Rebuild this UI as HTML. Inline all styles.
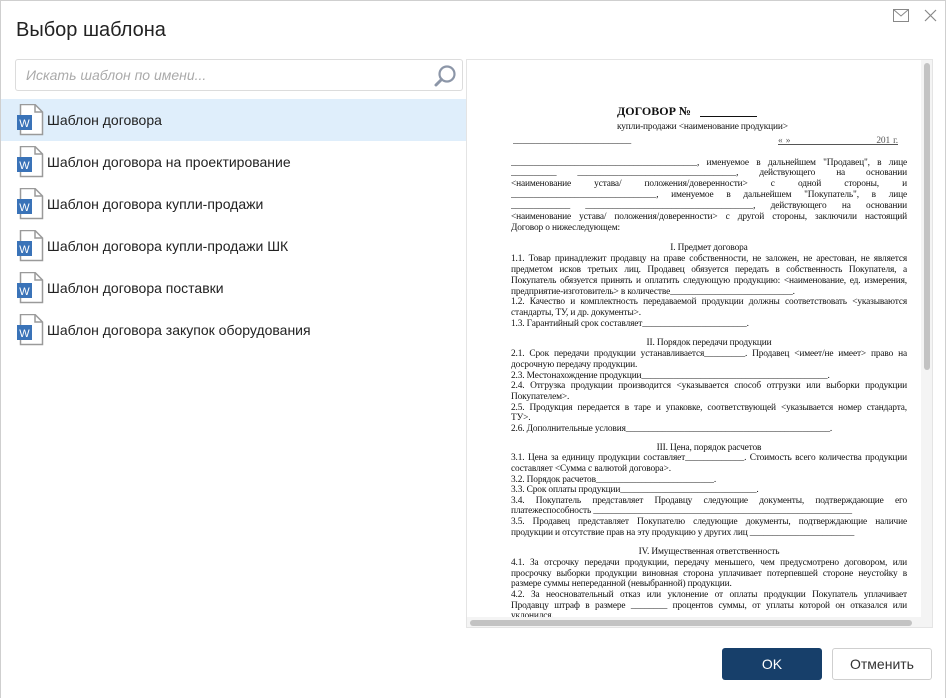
<!DOCTYPE html>
<html><head><meta charset="utf-8">
<style>
*{margin:0;padding:0;box-sizing:border-box}
html,body{width:947px;height:698px;overflow:hidden;background:#fff;font-family:"Liberation Sans",sans-serif}
.frame{position:absolute;left:0;top:0;width:946px;height:698px;border:1px solid #cfcfcf;border-bottom:none}
.title{position:absolute;left:16px;top:19px;font-size:20px;color:#222}
.search{position:absolute;left:15px;top:59px;width:448px;height:32px;border:1px solid #dcdcdc;border-radius:3px}
.search span{position:absolute;left:10px;top:7px;font-size:14px;font-style:italic;color:#aaa}
.row{position:absolute;left:1px;width:465px;height:42px}
.row.sel{background:#dfeefb}
.row .t{position:absolute;left:46px;top:13px;font-size:14px;color:#222}
.ic{position:absolute;left:15px;top:5px}
.pv{position:absolute;left:466px;top:59px;width:467px;height:569px;border:1px solid #e4e4e4;background:#fff;overflow:hidden}
.doc{position:absolute;left:0;top:0;font-family:"Liberation Serif",serif;font-size:9.4px;color:#111;letter-spacing:-0.15px}
.l{position:absolute;left:44px;width:396px;white-space:nowrap;line-height:11px;height:11px;overflow:hidden}
.j{text-align:justify;text-align-last:justify;white-space:normal}
.c{text-align:center}
.btn{position:absolute;top:648px;width:100px;height:32px;border-radius:3px;font-size:14px;text-align:center;line-height:30px}
</style></head><body>
<div class="frame"></div>
<div class="title">Выбор шаблона</div>
<svg style="position:absolute;left:893px;top:9px" width="16" height="13"><rect x="0.5" y="0.5" width="15" height="12" fill="none" stroke="#888"/><path d="M0.5 0.5L8 7L15.5 0.5" fill="none" stroke="#888"/></svg>
<svg style="position:absolute;left:924px;top:9px" width="13" height="13"><path d="M1 1L12 12M12 1L1 12" stroke="#888" stroke-width="1.2"/></svg>
<div class="search"><span>Искать шаблон по имени...</span>
<svg style="position:absolute;left:417px;top:4px" width="24" height="24"><circle cx="14" cy="10" r="7.5" fill="none" stroke="#8c96a8" stroke-width="2.2"/><path d="M8.5 15.5L3 21" stroke="#8c96a8" stroke-width="3" stroke-linecap="round"/></svg></div>

<div class="row sel" style="top:99px"><svg class="ic" width="30" height="32"><path d="M4.5 0.5H19L26.5 8V30.5H4.5Z" fill="#fff" stroke="#9a9a9a" stroke-width="1.5"/><path d="M19 0.5V8H26.5" fill="none" stroke="#9a9a9a" stroke-width="1.5"/><rect x="1" y="11" width="15" height="15" fill="#3a73b8"/><text x="8.5" y="23" font-size="11" fill="#fff" text-anchor="middle" font-family="Liberation Sans">W</text></svg><div class="t">Шаблон договора</div></div>
<div class="row" style="top:141px"><svg class="ic" width="30" height="32"><path d="M4.5 0.5H19L26.5 8V30.5H4.5Z" fill="#fff" stroke="#9a9a9a" stroke-width="1.5"/><path d="M19 0.5V8H26.5" fill="none" stroke="#9a9a9a" stroke-width="1.5"/><rect x="1" y="11" width="15" height="15" fill="#3a73b8"/><text x="8.5" y="23" font-size="11" fill="#fff" text-anchor="middle" font-family="Liberation Sans">W</text></svg><div class="t">Шаблон договора на проектирование</div></div>
<div class="row" style="top:183px"><svg class="ic" width="30" height="32"><path d="M4.5 0.5H19L26.5 8V30.5H4.5Z" fill="#fff" stroke="#9a9a9a" stroke-width="1.5"/><path d="M19 0.5V8H26.5" fill="none" stroke="#9a9a9a" stroke-width="1.5"/><rect x="1" y="11" width="15" height="15" fill="#3a73b8"/><text x="8.5" y="23" font-size="11" fill="#fff" text-anchor="middle" font-family="Liberation Sans">W</text></svg><div class="t">Шаблон договора купли-продажи</div></div>
<div class="row" style="top:225px"><svg class="ic" width="30" height="32"><path d="M4.5 0.5H19L26.5 8V30.5H4.5Z" fill="#fff" stroke="#9a9a9a" stroke-width="1.5"/><path d="M19 0.5V8H26.5" fill="none" stroke="#9a9a9a" stroke-width="1.5"/><rect x="1" y="11" width="15" height="15" fill="#3a73b8"/><text x="8.5" y="23" font-size="11" fill="#fff" text-anchor="middle" font-family="Liberation Sans">W</text></svg><div class="t">Шаблон договора купли-продажи ШК</div></div>
<div class="row" style="top:267px"><svg class="ic" width="30" height="32"><path d="M4.5 0.5H19L26.5 8V30.5H4.5Z" fill="#fff" stroke="#9a9a9a" stroke-width="1.5"/><path d="M19 0.5V8H26.5" fill="none" stroke="#9a9a9a" stroke-width="1.5"/><rect x="1" y="11" width="15" height="15" fill="#3a73b8"/><text x="8.5" y="23" font-size="11" fill="#fff" text-anchor="middle" font-family="Liberation Sans">W</text></svg><div class="t">Шаблон договора поставки</div></div>
<div class="row" style="top:309px"><svg class="ic" width="30" height="32"><path d="M4.5 0.5H19L26.5 8V30.5H4.5Z" fill="#fff" stroke="#9a9a9a" stroke-width="1.5"/><path d="M19 0.5V8H26.5" fill="none" stroke="#9a9a9a" stroke-width="1.5"/><rect x="1" y="11" width="15" height="15" fill="#3a73b8"/><text x="8.5" y="23" font-size="11" fill="#fff" text-anchor="middle" font-family="Liberation Sans">W</text></svg><div class="t">Шаблон договора закупок оборудования</div></div>

<div class="pv"><div class="doc">
<div class="l" style="left:150px;top:44px;font-size:12px;font-weight:bold;height:15px;line-height:15px;letter-spacing:0">ДОГОВОР №&nbsp;&nbsp;&nbsp;<u>&nbsp;&nbsp;&nbsp;&nbsp;&nbsp;&nbsp;&nbsp;&nbsp;&nbsp;&nbsp;&nbsp;&nbsp;&nbsp;&nbsp;&nbsp;&nbsp;&nbsp;&nbsp;&nbsp;</u></div>
<div class="l" style="left:150px;top:62px">купли-продажи &lt;наименование продукции&gt;</div>
<div class="l" style="left:46px;top:76px">__________________________</div>
<div class="l" style="left:311px;top:76px;width:120px;color:#555;text-decoration:underline;text-align:justify;text-align-last:justify;white-space:normal">« » &nbsp;&nbsp;&nbsp;&nbsp;&nbsp;&nbsp;&nbsp;&nbsp;&nbsp;&nbsp;&nbsp;&nbsp;&nbsp;&nbsp;&nbsp;&nbsp;&nbsp;&nbsp;&nbsp;&nbsp;&nbsp;&nbsp;&nbsp;&nbsp;&nbsp;&nbsp;201 г.</div>
<div class="l j" style="top:98px">_________________________________________, именуемое в дальнейшем "Продавец", в лице</div>
<div class="l j" style="top:108px">__________ ___________________________________, действующего на основании</div>
<div class="l j" style="top:119px">&lt;наименование устава/ положения/доверенности&gt; с одной стороны, и</div>
<div class="l j" style="top:130px">________________________________, именуемое в дальнейшем "Покупатель", в лице</div>
<div class="l j" style="top:141px">_____________ _____________________________________, действующего на основании</div>
<div class="l j" style="top:152px">&lt;наименование устава/ положения/доверенности&gt; с другой стороны, заключили настоящий</div>
<div class="l" style="top:163px">Договор о нижеследующем:</div>
<div class="l c" style="top:183px">I. Предмет договора</div>
<div class="l j" style="top:194px">1.1. Товар принадлежит продавцу на праве собственности, не заложен, не арестован, не является</div>
<div class="l j" style="top:205px">предметом исков третьих лиц. Продавец обязуется передать в собственность Покупателя, а</div>
<div class="l j" style="top:216px">Покупатель обязуется принять и оплатить следующую продукцию: &lt;наименование, ед. измерения,</div>
<div class="l" style="top:227px">предприятие-изготовитель&gt; в количестве___________________________.</div>
<div class="l j" style="top:237px">1.2. Качество и комплектность передаваемой продукции должны соответствовать &lt;указываются</div>
<div class="l" style="top:248px">стандарты, ТУ, и др. документы&gt;.</div>
<div class="l" style="top:259px">1.3. Гарантийный срок составляет_______________________.</div>
<div class="l c" style="top:278px">II. Порядок передачи продукции</div>
<div class="l j" style="top:289px">2.1. Срок передачи продукции устанавливается_________. Продавец &lt;имеет/не имеет&gt; право на</div>
<div class="l" style="top:300px">досрочную передачу продукции.</div>
<div class="l" style="top:311px">2.3. Местонахождение продукции_________________________________________.</div>
<div class="l j" style="top:321px">2.4. Отгрузка продукции производится &lt;указывается способ отгрузки или выборки продукции</div>
<div class="l" style="top:332px">Покупателем&gt;.</div>
<div class="l j" style="top:343px">2.5. Продукция передается в таре и упаковке, соответствующей &lt;указывается номер стандарта,</div>
<div class="l" style="top:353px">ТУ&gt;.</div>
<div class="l" style="top:364px">2.6. Дополнительные условия_____________________________________________.</div>
<div class="l c" style="top:383px">III. Цена, порядок расчетов</div>
<div class="l j" style="top:393px">3.1. Цена за единицу продукции составляет_____________. Стоимость всего количества продукции</div>
<div class="l" style="top:404px">составляет &lt;Сумма с валютой договора&gt;.</div>
<div class="l" style="top:415px">3.2. Порядок расчетов__________________________.</div>
<div class="l" style="top:425px">3.3. Срок оплаты продукции______________________________.</div>
<div class="l j" style="top:436px">3.4. Покупатель представляет Продавцу следующие документы, подтверждающие его</div>
<div class="l" style="top:446px">платежеспособность _________________________________________________________</div>
<div class="l j" style="top:457px">3.5. Продавец представляет Покупателю следующие документы, подтверждающие наличие</div>
<div class="l" style="top:468px">продукции и отсутствие прав на эту продукцию у других лиц _______________________</div>
<div class="l c" style="top:487px">IV. Имущественная ответственность</div>
<div class="l j" style="top:498px">4.1. За отсрочку передачи продукции, передачу меньшего, чем предусмотрено договором, или</div>
<div class="l j" style="top:509px">просрочку выборки продукции виновная сторона уплачивает потерпевшей стороне неустойку в</div>
<div class="l" style="top:519px">размере суммы непереданной (невыбранной) продукции.</div>
<div class="l j" style="top:530px">4.2. За неосновательный отказ или уклонение от оплаты продукции Покупатель уплачивает</div>
<div class="l j" style="top:541px">Продавцу штраф в размере ________ процентов суммы, от уплаты которой он отказался или</div>
<div class="l" style="top:551px">уклонился.</div>
</div>
<div style="position:absolute;left:454px;top:0;width:12px;height:557px;background:#f4f4f4"></div>
<div style="position:absolute;left:457px;top:3px;width:6px;height:307px;background:#c3c3c3;border-radius:3px"></div>
<div style="position:absolute;left:0;top:557px;width:466px;height:12px;background:#f4f4f4"></div>
<div style="position:absolute;left:3px;top:560px;width:442px;height:6px;background:#c3c3c3;border-radius:3px"></div>
</div>

<div class="btn" style="left:722px;background:#173f6a;color:#fff;line-height:32px">OK</div>
<div class="btn" style="left:832px;border:1px solid #cfcfcf;color:#333">Отменить</div>
</body></html>
